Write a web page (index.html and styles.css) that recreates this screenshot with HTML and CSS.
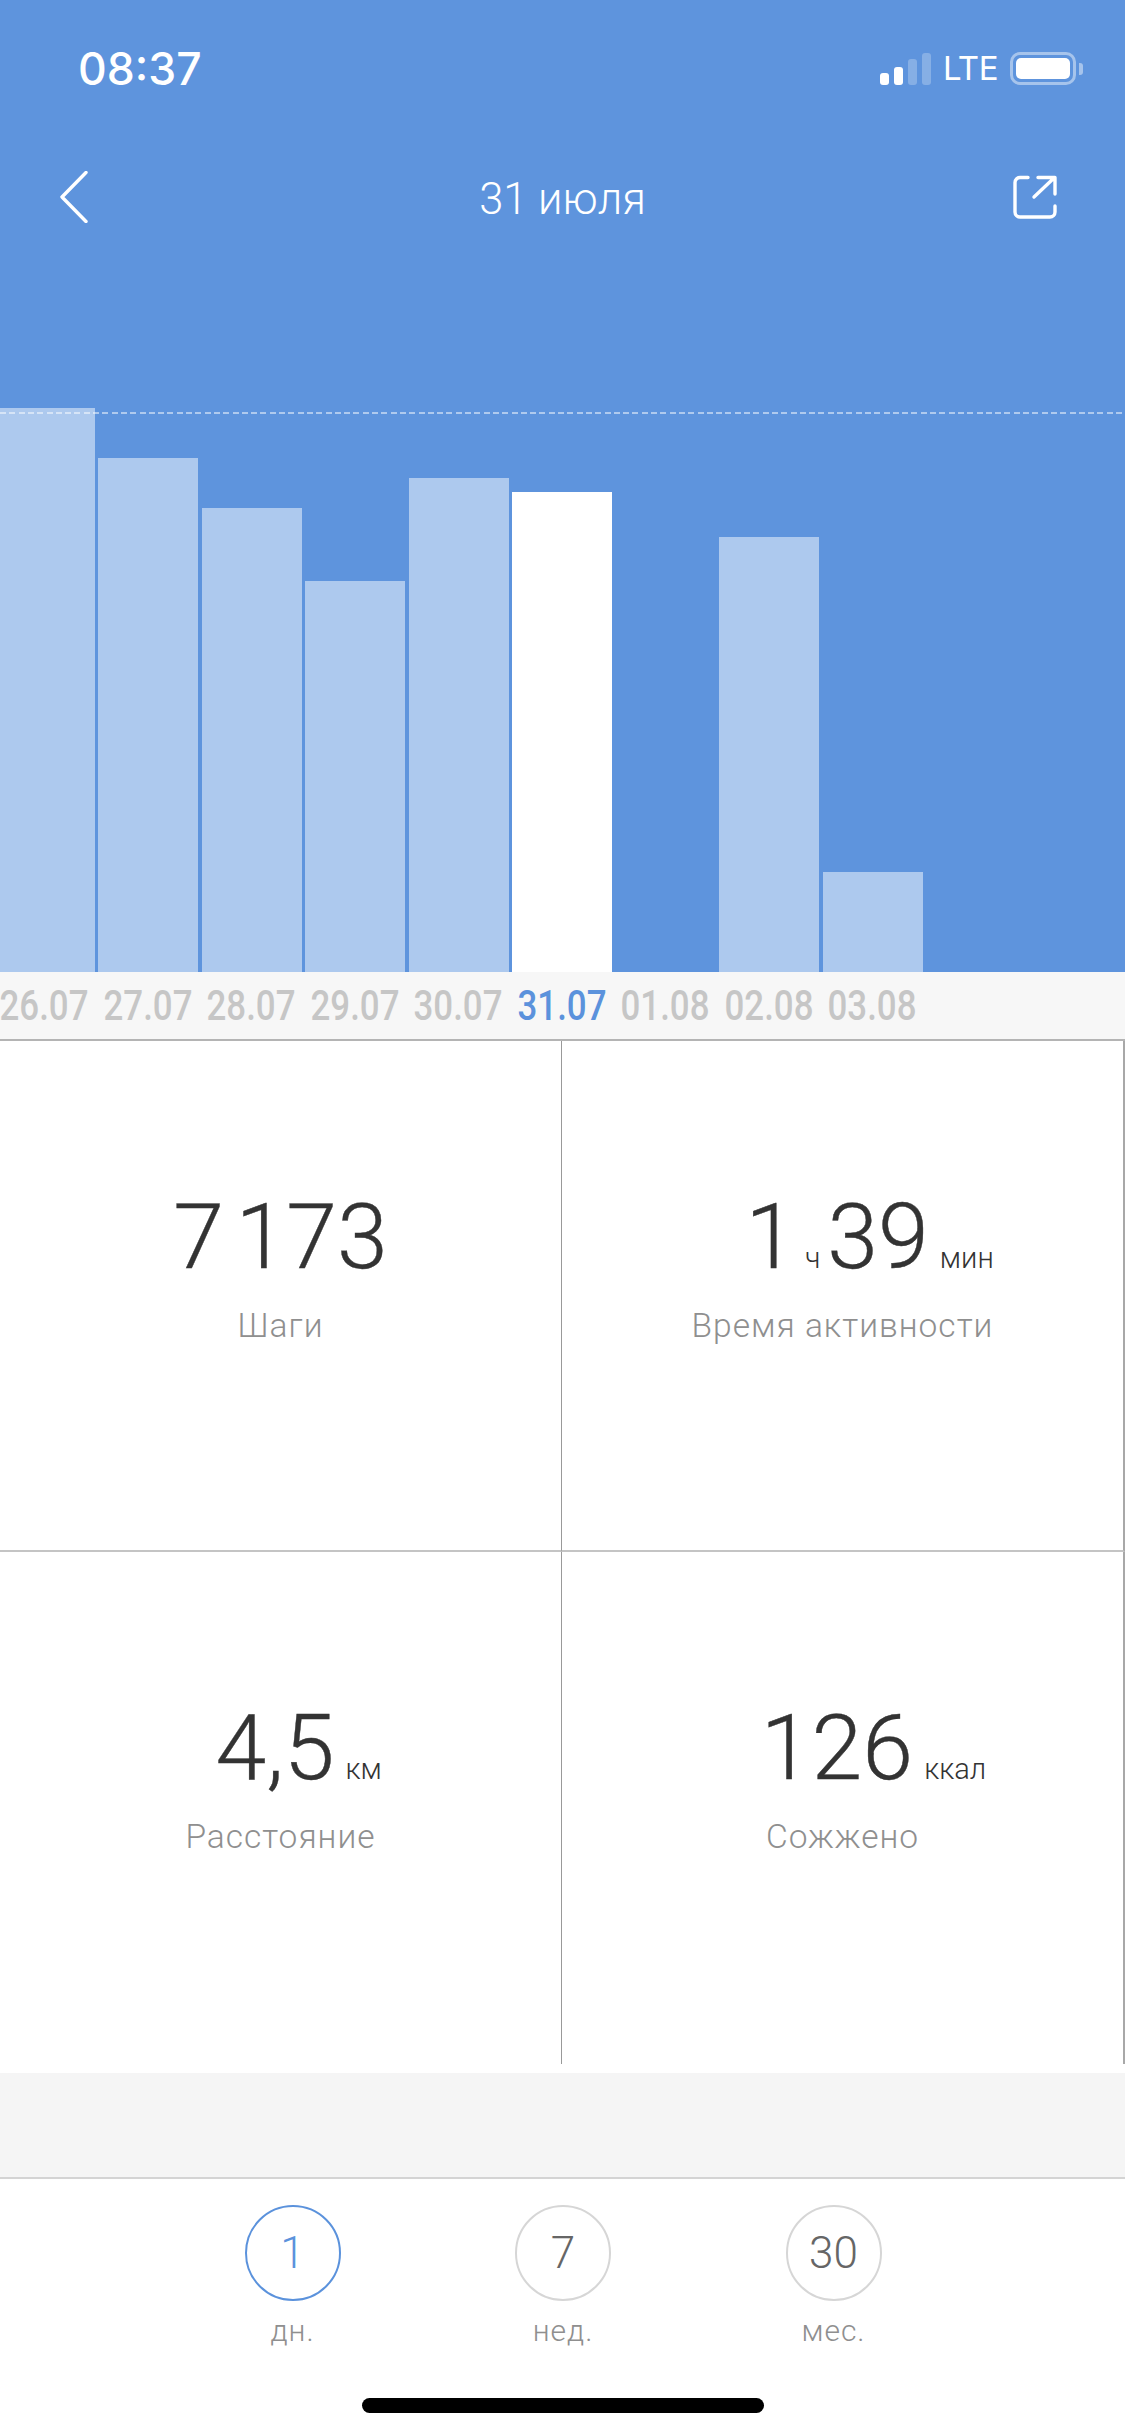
FILE: index.html
```html
<!DOCTYPE html>
<html lang="ru">
<head>
<meta charset="utf-8">
<title>31 июля</title>
<link rel="stylesheet" href="styles.css">
</head>
<body>
<div class="screen">
  <header class="top">
    <div class="status">
      <span class="time">08:37</span>
      <div class="status-right">
        <div class="signal"><i class="s1"></i><i class="s2"></i><i class="s3"></i><i class="s4"></i></div>
        <span class="lte">LTE</span>
        <div class="battery"><div class="battery-fill"></div></div>
        <div class="battery-nub"></div>
      </div>
    </div>
    <nav class="nav">
      <svg class="back" width="28" height="52" viewBox="0 0 28 52"><path d="M26 1.5 L2 26 L26 50.5" fill="none" stroke="#fff" stroke-width="3.4" stroke-linecap="round" stroke-linejoin="round"/></svg>
      <h1 class="title">31 июля</h1>
      <svg class="share" width="44" height="44" viewBox="0 0 44 44"><path d="M15 2.5 H7 a5 5 0 0 0 -5 5 V37 a5 5 0 0 0 5 5 H37 a5 5 0 0 0 5 -5 V31" fill="none" stroke="#fff" stroke-width="3.4" stroke-linecap="round"/><path d="M25 2.5 H42 V19 M41 3 L21 22" fill="none" stroke="#fff" stroke-width="3.4" stroke-linecap="round" stroke-linejoin="round"/></svg>
    </nav>
    <div class="chart">
      <div class="goal"></div>
      <div class="bar" style="height:564px"></div>
      <div class="bar" style="height:514px"></div>
      <div class="bar" style="height:464px"></div>
      <div class="bar" style="height:391px"></div>
      <div class="bar" style="height:494px"></div>
      <div class="bar active" style="height:480px"></div>
      <div class="bar" style="height:0"></div>
      <div class="bar" style="height:435px"></div>
      <div class="bar" style="height:100px"></div>
    </div>
  </header>
  <div class="dates">
    <span>26.07</span><span>27.07</span><span>28.07</span><span>29.07</span><span>30.07</span><span class="on">31.07</span><span>01.08</span><span>02.08</span><span>03.08</span>
  </div>
  <section class="stats">
    <div class="cell">
      <div class="value">7 173</div>
      <div class="label">Шаги</div>
    </div>
    <div class="cell">
      <div class="value">1<small>ч</small>39<small class="end">мин</small></div>
      <div class="label">Время активности</div>
    </div>
    <div class="cell">
      <div class="value">4,5<small class="end">км</small></div>
      <div class="label">Расстояние</div>
    </div>
    <div class="cell">
      <div class="value">126<small class="end">ккал</small></div>
      <div class="label">Сожжено</div>
    </div>
  </section>
  <div class="band"></div>
  <footer class="tabs">
    <div class="tab-row">
      <div class="tab on"><div class="circle">1</div><div class="tab-label">дн.</div></div>
      <div class="tab"><div class="circle">7</div><div class="tab-label">нед.</div></div>
      <div class="tab"><div class="circle">30</div><div class="tab-label">мес.</div></div>
    </div>
    <div class="home"></div>
  </footer>
</div>
</body>
</html>
```
FILE: styles.css
```css
* { box-sizing: border-box; margin: 0; padding: 0; }
html, body { width: 1125px; height: 2436px; overflow: hidden; background: #fff; }
body { font-family: Roboto, "Noto Sans", sans-serif; }
.screen { width: 1125px; height: 2436px; display: flex; flex-direction: column; overflow: hidden; }

.top { height: 972px; background: #5e94dd; color: #fff; display: flex; flex-direction: column; }
.status { height: 140px; padding: 47px 42px 0 78px; display: flex; justify-content: space-between; align-items: flex-start; }
.time { font-family: Inter, sans-serif; font-weight: 550; font-size: 44.5px; line-height: 44px; }
.status-right { display: flex; align-items: flex-end; height: 34px; margin-top: 4px; }
.signal { display: flex; align-items: flex-end; gap: 5px; height: 33px; margin-right: 12px; }
.signal i { display: block; width: 9px; border-radius: 3px; background: #fff; }
.s1 { height: 12px; }
.s2 { height: 18px; }
.s3 { height: 26px; opacity: .25; }
.s4 { height: 32px; opacity: .25; }
.lte { font-family: Inter, sans-serif; font-size: 33px; line-height: 34px; font-weight: 400; margin-right: 12px; letter-spacing: -.5px; }
.battery { width: 66px; height: 33px; border: 3px solid rgba(255,255,255,.45); border-radius: 10px; padding: 3px; }
.battery-fill { width: 100%; height: 100%; background: #fff; border-radius: 5px; }
.battery-nub { width: 4px; height: 12px; background: rgba(255,255,255,.45); border-radius: 0 3px 3px 0; margin: 0 0 10px 3px; }

.nav { height: 128px; padding: 0 68px 0 60px; display: flex; align-items: center; justify-content: space-between; position: relative; }
.title { font-weight: 300; font-size: 43.5px; line-height: 48px; position: absolute; left: 0; right: 0; top: 36px; text-align: center; }
.back { margin-top: -14px; }
.share { margin-top: -14px; }

.chart { height: 564px; margin-top: 140px; margin-left: -5.5px; display: flex; align-items: flex-end; gap: 3.5px; position: relative; }
.goal { position: absolute; left: 5.5px; width: 1125px; top: 4px; height: 2px; background: repeating-linear-gradient(90deg, rgba(255,255,255,.5) 0 6px, transparent 6px 9.3px); }
.bar { flex: 0 0 100px; background: #adc9ee; }
.bar.active { background: #fff; }

.dates { height: 67px; background: #f7f7f7; display: flex; gap: 3.5px; align-items: center; overflow: hidden; }
.dates span { flex: 0 0 100px; min-width: 0; display: flex; justify-content: center; font-size: 42px; line-height: 67px; font-weight: 500; color: #c6c6c6; transform: scaleX(.83); white-space: nowrap; }
.dates span:first-child { margin-left: -6px; }
.dates .on { color: #5b92dc; }

.stats { height: 1025px; border-top: 2px solid #b4b4b4; display: grid; grid-template-columns: 562px 563px; grid-template-rows: 511px 512px; background: #fff; }
.cell { border-right: 1px solid #999; display: flex; flex-direction: column; align-items: center; padding-top: 151px; }
.cell:nth-child(-n+2) { border-bottom: 2px solid #c4c4c4; }
.cell:nth-child(2n) { border-right: 2px solid #a8a8a8; }
.value { font-weight: 300; font-size: 91.5px; line-height: 90px; height: 90px; color: #333; white-space: nowrap; word-spacing: -11px; -webkit-text-stroke: .4px #333; }
.value small { font-size: 29px; font-weight: 300; margin: 0 7px 0 9px; -webkit-text-stroke: 0; }
.value small.end { display: inline-block; width: 0; margin: 0 0 0 11px; }
.label { margin-top: 24px; font-weight: 300; font-size: 33.5px; line-height: 40px; letter-spacing: 1px; color: #8f8f8f; white-space: nowrap; }

.band { height: 106px; margin-top: 9px; background: #f5f5f5; border-bottom: 2px solid #d4d4d4; }

.tabs { flex: 1; background: #fff; display: flex; flex-direction: column; align-items: center; }
.tab-row { display: flex; gap: 174.5px; margin-top: 26px; margin-left: 1px; }
.tab { width: 96px; display: flex; flex-direction: column; align-items: center; }
.circle { width: 96px; height: 96px; border-radius: 50%; border: 2px solid #d6d6d6; color: #666; font-weight: 300; font-size: 44px; display: flex; align-items: center; justify-content: center; }
.tab-label { margin-top: 10px; font-weight: 300; font-size: 30px; line-height: 40px; letter-spacing: 1px; color: #8f8f8f; white-space: nowrap; }
.tab.on .circle { border-color: #5b92dc; color: #5b92dc; }
.home { width: 402px; height: 15px; border-radius: 8px; background: #000; margin-top: 47px; }
```
